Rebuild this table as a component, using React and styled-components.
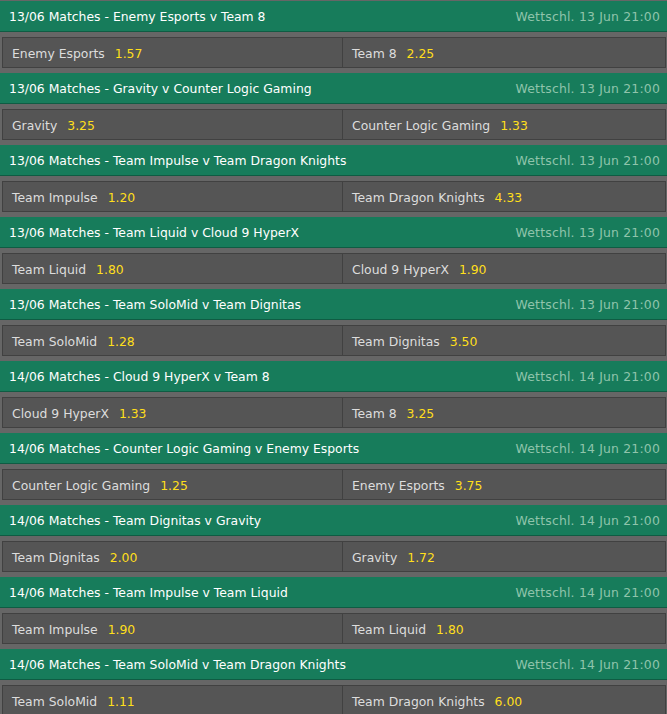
import React from "react";
import styled, { createGlobalStyle } from "styled-components";

const matches = [
    { day: "13/06", home: "Enemy Esports", homeOdds: "1.57", away: "Team 8", awayOdds: "2.25", date: "13 Jun 21:00" },
    { day: "13/06", home: "Gravity", homeOdds: "3.25", away: "Counter Logic Gaming", awayOdds: "1.33", date: "13 Jun 21:00" },
    { day: "13/06", home: "Team Impulse", homeOdds: "1.20", away: "Team Dragon Knights", awayOdds: "4.33", date: "13 Jun 21:00" },
    { day: "13/06", home: "Team Liquid", homeOdds: "1.80", away: "Cloud 9 HyperX", awayOdds: "1.90", date: "13 Jun 21:00" },
    { day: "13/06", home: "Team SoloMid", homeOdds: "1.28", away: "Team Dignitas", awayOdds: "3.50", date: "13 Jun 21:00" },
    { day: "14/06", home: "Cloud 9 HyperX", homeOdds: "1.33", away: "Team 8", awayOdds: "3.25", date: "14 Jun 21:00" },
    { day: "14/06", home: "Counter Logic Gaming", homeOdds: "1.25", away: "Enemy Esports", awayOdds: "3.75", date: "14 Jun 21:00" },
    { day: "14/06", home: "Team Dignitas", homeOdds: "2.00", away: "Gravity", awayOdds: "1.72", date: "14 Jun 21:00" },
    { day: "14/06", home: "Team Impulse", homeOdds: "1.90", away: "Team Liquid", awayOdds: "1.80", date: "14 Jun 21:00" },
    { day: "14/06", home: "Team SoloMid", homeOdds: "1.11", away: "Team Dragon Knights", awayOdds: "6.00", date: "14 Jun 21:00" },
];

export default function App() {
    return (
        <>
            <GlobalStyle />
            <List>
                {matches.map((m, i) => (
                    <Match key={i}>
                        <Header>
                            <Title>{m.day} Matches - {m.home} v {m.away}</Title>
                            <DateText>Wettschl. {m.date}</DateText>
                        </Header>
                        <OddsRow>
                            <Cell>
                                <Team>{m.home}</Team>
                                <Odds>{m.homeOdds}</Odds>
                            </Cell>
                            <Cell divider>
                                <Team>{m.away}</Team>
                                <Odds>{m.awayOdds}</Odds>
                            </Cell>
                        </OddsRow>
                    </Match>
                ))}
            </List>
        </>
    );
}

// styled-components
const GlobalStyle = createGlobalStyle`
    body {
        margin: 0;
        background: #666666;
        font-family: Tahoma, "DejaVu Sans", sans-serif;
        font-size: 12.4px;
        overflow: hidden;
    }
`

const List = styled.div`
    display: flex;
    flex-direction: column;
`

const Match = styled.div`
    padding-top: 1px;
    padding-bottom: 4px;
`

const Header = styled.div`
    box-sizing: border-box;
    height: 31px;
    padding: 1px 7px 0 9px;
    display: flex;
    align-items: center;
    justify-content: space-between;
    background: #177c5b;
    border-bottom: 1px solid #0f5c43;
`

const Title = styled.span`
    color: #ffffff;
`

const DateText = styled.span`
    color: #8fc4ab;
    letter-spacing: 0.2px;
`

const OddsRow = styled.div`
    margin: 5px 1px 0 2px;
    height: 29px;
    display: grid;
    grid-template-columns: 339px 1fr;
    background: #555555;
    border: 1px solid #414141;
`

const Cell = styled.div`
    display: flex;
    align-items: center;
    gap: 10px;
    padding: 2px 0 0 9px;
    border-left: ${props => props.divider ? '1px solid #414141' : 'none'};
`

const Team = styled.span`
    color: #dddddd;
`

const Odds = styled.span`
    color: #ffdf1b;
`
